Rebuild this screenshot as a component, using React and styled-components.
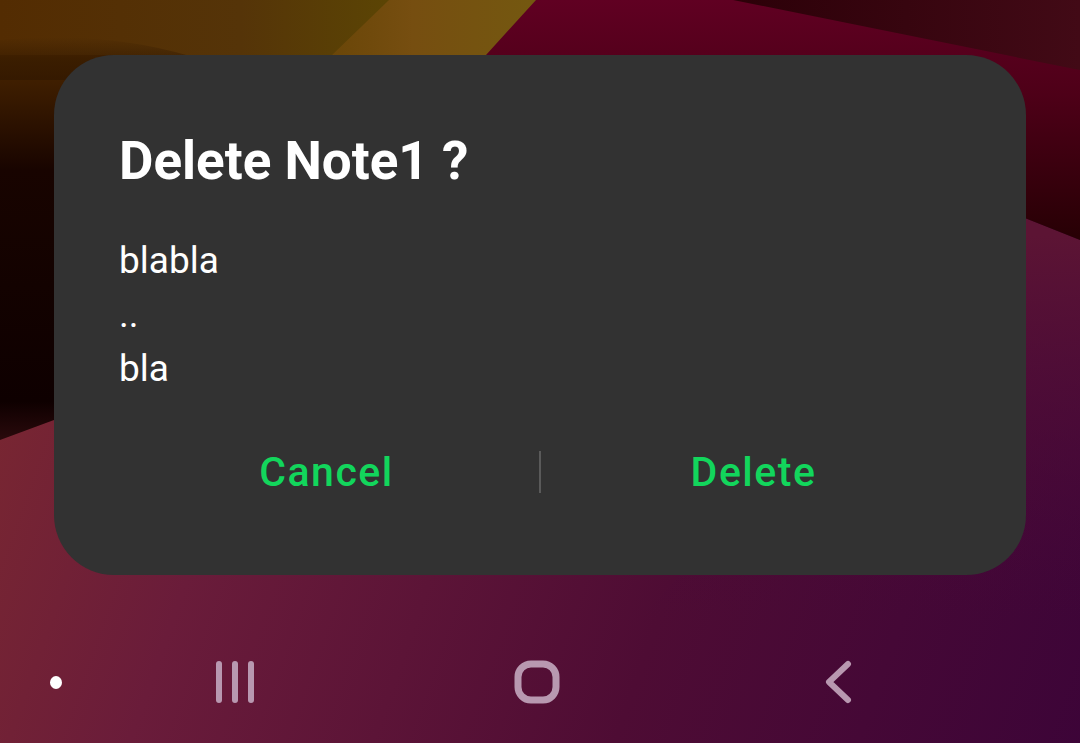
import React from "react"
import styled, { createGlobalStyle } from "styled-components"

const GlobalStyle = createGlobalStyle`
  html, body {
    margin: 0;
    padding: 0;
    background: #000;
  }
  body {
    font-family: Roboto, "Noto Sans", "Liberation Sans", sans-serif;
  }
`

// wallpaper behind the dialog, only the edges show
const Wall = () => (
  <Wallpaper viewBox="0 0 1080 743" preserveAspectRatio="none">
    <defs>
      <linearGradient id="base" gradientUnits="userSpaceOnUse" x1="0" y1="420" x2="1080" y2="800">
        <stop offset="0" stopColor="#782632" />
        <stop offset="0.2" stopColor="#6a1c3a" />
        <stop offset="0.6" stopColor="#4e0c34" />
        <stop offset="1" stopColor="#3c0438" />
      </linearGradient>
      <linearGradient id="ribbon" gradientUnits="userSpaceOnUse" x1="0" y1="235" x2="0" y2="620">
        <stop offset="0" stopColor="#5c1434" stopOpacity="1" />
        <stop offset="1" stopColor="#48083a" stopOpacity="0" />
      </linearGradient>
      <linearGradient id="crimson" gradientUnits="userSpaceOnUse" x1="0" y1="0" x2="0" y2="235">
        <stop offset="0" stopColor="#600022" />
        <stop offset="0.4" stopColor="#4e0018" />
        <stop offset="1" stopColor="#280005" />
      </linearGradient>
      <linearGradient id="maroon" x1="0" y1="0" x2="1" y2="0">
        <stop offset="0" stopColor="#2c0008" />
        <stop offset="1" stopColor="#420a16" />
      </linearGradient>
      <linearGradient id="amberTop" gradientUnits="userSpaceOnUse" x1="0" y1="0" x2="400" y2="0">
        <stop offset="0" stopColor="#532c02" />
        <stop offset="0.6" stopColor="#553408" />
        <stop offset="1" stopColor="#5c4604" />
      </linearGradient>
      <linearGradient id="amberLeft" gradientUnits="userSpaceOnUse" x1="0" y1="55" x2="0" y2="440">
        <stop offset="0" stopColor="#4a2600" />
        <stop offset="0.3" stopColor="#180400" />
        <stop offset="0.9" stopColor="#0e0000" />
        <stop offset="1" stopColor="#2a0a0c" />
      </linearGradient>
      <linearGradient id="gold" gradientUnits="userSpaceOnUse" x1="330" y1="0" x2="536" y2="0">
        <stop offset="0" stopColor="#6a4608" />
        <stop offset="0.4" stopColor="#764e10" />
        <stop offset="1" stopColor="#745810" />
      </linearGradient>
      <linearGradient id="shade" x1="0" y1="0" x2="0" y2="1">
        <stop offset="0" stopColor="#2e1600" stopOpacity="0" />
        <stop offset="0.5" stopColor="#2e1600" stopOpacity="0.5" />
        <stop offset="1" stopColor="#2e1600" stopOpacity="0.6" />
      </linearGradient>
    </defs>
    <rect width="1080" height="743" fill="url(#base)" />
    <path d="M1000 208 L1080 240 V620 H640 Z" fill="url(#ribbon)" />
    <path d="M500 0 H1080 V240 L1000 208 L700 300 L300 300 Z" fill="url(#crimson)" />
    <path d="M733 0 H1080 V70 Q980 50 733 0 Z" fill="url(#maroon)" />
    <path d="M0 0 H400 L330 60 H0 Z" fill="url(#amberTop)" />
    <path d="M0 55 H340 L300 300 L54 420 L0 440 Z" fill="url(#amberLeft)" />
    <path d="M0 40 Q100 30 190 56 L190 80 L0 80 Z" fill="url(#shade)" />
    <path d="M389 0 H536 L486 55 L440 120 H290 L332 55 Z" fill="url(#gold)" />
  </Wallpaper>
)

const App = () => {
  return (
    <>
      <GlobalStyle />
      <Screen>
        <Wall />
        <Layer>
          <Dialog>
            <Title>Delete Note1 ?</Title>
            <Message>
              blabla
              <br />
              ..
              <br />
              bla
            </Message>
            <Actions>
              <ActionButton>Cancel</ActionButton>
              <Divider />
              <ActionButton>Delete</ActionButton>
            </Actions>
          </Dialog>
          <NavBar>
            <DotCell>
              <Dot />
            </DotCell>
            <NavButton>
              <svg width="40" height="42" viewBox="0 0 40 42">
                <g stroke="#b898b0" strokeWidth="6" strokeLinecap="round">
                  <line x1="4" y1="3" x2="4" y2="39" />
                  <line x1="20" y1="3" x2="20" y2="39" />
                  <line x1="36" y1="3" x2="36" y2="39" />
                </g>
              </svg>
            </NavButton>
            <NavButton>
              <svg width="46" height="44" viewBox="0 0 46 44">
                <rect x="4" y="4" width="38" height="36" rx="13" fill="none" stroke="#b898b0" strokeWidth="7" />
              </svg>
            </NavButton>
            <NavButton>
              <svg width="30" height="44" viewBox="0 0 30 44">
                <polyline
                  points="24,4 5,22 24,40"
                  fill="none"
                  stroke="#b898b0"
                  strokeWidth="6"
                  strokeLinecap="round"
                  strokeLinejoin="round"
                />
              </svg>
            </NavButton>
          </NavBar>
        </Layer>
      </Screen>
    </>
  )
}

export default App

const Screen = styled.div`
  display: grid;
  width: 1080px;
  height: 743px;
  overflow: hidden;

  > * {
    grid-area: 1 / 1;
  }
`
const Wallpaper = styled.svg`
  display: block;
  width: 1080px;
  height: 743px;
`
const Layer = styled.div`
  display: flex;
  flex-direction: column;
  padding-top: 55px;
`
const Dialog = styled.div`
  box-sizing: border-box;
  display: flex;
  flex-direction: column;
  height: 520px;
  margin: 0 54px;
  padding: 74px 60px 73px;
  background: #323232;
  border-radius: 60px;
`
const Title = styled.h1`
  margin: 0 5px;
  font-size: 53px;
  line-height: 64px;
  font-weight: 700;
  color: #fff;
`
const Message = styled.p`
  margin: 41px 5px 0;
  font-size: 37px;
  line-height: 54px;
  color: #fff;
`
const Actions = styled.div`
  display: flex;
  align-items: center;
  height: 60px;
  margin-top: 46px;
`
const ActionButton = styled.button`
  flex: 1;
  padding: 0;
  border: 0;
  background: none;
  font-family: Roboto, "Noto Sans", sans-serif;
  font-size: 41px;
  line-height: 60px;
  font-weight: 500;
  letter-spacing: 1.5px;
  color: #12d65c;
`
const Divider = styled.span`
  width: 2px;
  height: 42px;
  background: #5a5a5a;
`
const NavBar = styled.nav`
  flex: 1;
  display: grid;
  grid-template-columns: 84px repeat(3, 302px);
  align-items: center;
  padding-top: 46px;
`
const DotCell = styled.div`
  display: flex;
  padding-left: 50px;
`
const Dot = styled.span`
  width: 12px;
  height: 13px;
  border-radius: 50%;
  background: #fff;
`
const NavButton = styled.div`
  display: flex;
  justify-content: center;
  align-items: center;
`
